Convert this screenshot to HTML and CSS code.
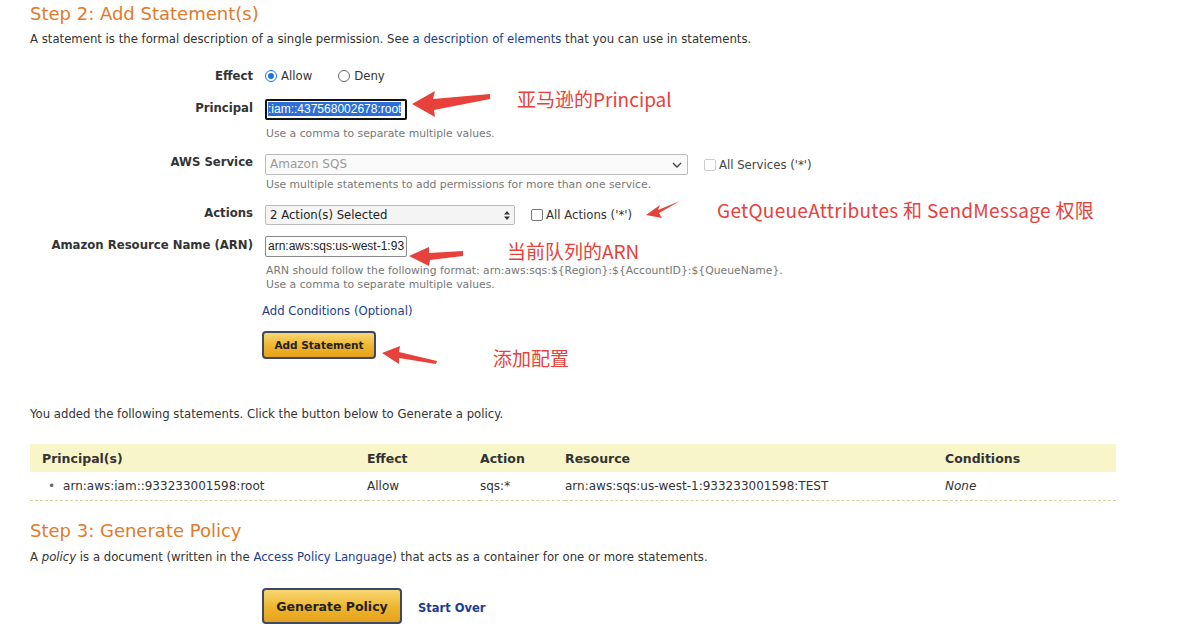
FILE: index.html
```html
<!DOCTYPE html>
<html lang="en">
<head>
    <meta charset="UTF-8">
    <meta name="viewport" content="width=device-width, initial-scale=1.0">
    <title>AWS Policy Generator</title>
    <link rel="stylesheet" href="styles.css">
</head>
<body>

    <div class="page">
        <h2 class="step-title">Step 2: Add Statement(s)</h2>
        <p class="intro">A statement is the formal description of a single permission. See <a href="#">a description of elements</a> that you can use in statements.</p>

        <div class="form">
            <div class="label">Effect</div>
            <div class="field radios">
                <label class="radio"><span class="dot on"></span>Allow</label>
                <label class="radio"><span class="dot"></span>Deny</label>
            </div>

            <div class="label lbl-principal">Principal</div>
            <div class="field f-principal">
                <div class="input focused"><span class="sel">:iam::437568002678:root</span></div>
                <div class="hint">Use a comma to separate multiple values.</div>
            </div>

            <div class="label lbl-service">AWS Service</div>
            <div class="field f-service">
                <div class="inline">
                    <div class="select service">Amazon SQS
                        <svg class="chev" width="10" height="6" viewBox="0 0 10 6"><path d="M1 1l4 4 4-4" fill="none" stroke="#444" stroke-width="1.4"/></svg>
                    </div>
                    <label class="check dim"><span class="box"></span>All Services ('*')</label>
                </div>
                <div class="hint">Use multiple statements to add permissions for more than one service.</div>
            </div>

            <div class="label lbl-actions">Actions</div>
            <div class="field f-actions">
                <div class="inline">
                    <div class="select actions">2 Action(s) Selected
                        <svg class="updown" width="6" height="9" viewBox="0 0 6 9"><path d="M0 3.5L3 0l3 3.5zM0 5.5L3 9l3-3.5z" fill="#333"/></svg>
                    </div>
                    <label class="check"><span class="box"></span>All Actions ('*')</label>
                </div>
            </div>

            <div class="label lbl-arn">Amazon Resource Name (ARN)</div>
            <div class="field f-arn">
                <div class="input arn">arn:aws:sqs:us-west-1:93</div>
                <div class="hint">ARN should follow the following format: arn:aws:sqs:${Region}:${AccountID}:${QueueName}.<br>Use a comma to separate multiple values.</div>
            </div>
        </div>

        <div class="actions-area">
            <a href="#" class="cond-link">Add Conditions (Optional)</a>
            <button class="gold-btn small">Add Statement</button>
        </div>

        <p class="added">You added the following statements. Click the button below to Generate a policy.</p>

        <table class="statements">
            <tr>
                <th class="c-principal">Principal(s)</th>
                <th class="c-effect">Effect</th>
                <th class="c-action">Action</th>
                <th class="c-resource">Resource</th>
                <th>Conditions</th>
            </tr>
            <tr>
                <td><span class="bullet">•</span>arn:aws:iam::933233001598:root</td>
                <td>Allow</td>
                <td>sqs:*</td>
                <td>arn:aws:sqs:us-west-1:933233001598:TEST</td>
                <td><em>None</em></td>
            </tr>
        </table>

        <h2 class="step-title step3">Step 3: Generate Policy</h2>
        <p class="intro intro3">A <em>policy</em> is a document (written in the <a href="#">Access Policy Language</a>) that acts as a container for one or more statements.</p>

        <div class="generate">
            <button class="gold-btn big">Generate Policy</button>
            <a href="#" class="start-over">Start Over</a>
        </div>

        <!-- red annotations drawn over the screenshot -->
        <svg class="marks" width="1180" height="627" viewBox="0 0 1180 627">
            <g fill="#e8413c">
                <path d="M412 104 L435 91 L433 99 L490 94 L490 99 L434 110 L435 117 Z"/>
                <path d="M646 215 L660 205 L658 210 L680 201 L659 213 L662 218 Z"/>
                <path d="M409 256 L429 247 L429 253 L463 251 L463 256 L430 260 L429 266 Z"/>
                <path d="M382 353 L400 346 L399 352 L437 361 L436 364 L399 358 L399 364 Z"/>
            </g>
        </svg>
        <div class="note n1">亚马逊的Principal</div>
        <div class="note n2">GetQueueAttributes 和 SendMessage 权限</div>
        <div class="note n3">当前队列的ARN</div>
        <div class="note n4">添加配置</div>
    </div>

</body>
</html>
```

FILE: styles.css
```css
body {
    margin: 0;
    background: white;
    font-family: "DejaVu Sans", Verdana, sans-serif;
    font-size: 11.7px;
    color: #333;
}
.page {
    position: relative;
    width: 1180px;
    height: 627px;
    overflow: hidden;
    padding: 0 0 0 30px;
    box-sizing: border-box;
}
a {
    color: #1b3d8f;
    text-decoration: none;
}
.step-title {
    margin: 0;
    padding-top: 3px;
    font-size: 18px;
    font-weight: normal;
    color: #e27a2a;
    line-height: 22px;
}
.intro {
    margin: 7px 0 0 0;
    line-height: 14px;
}

.form {
    display: grid;
    grid-template-columns: 223px auto;
    column-gap: 12px;
    margin-top: 23px;
}
.label {
    text-align: right;
    font-weight: bold;
    line-height: 14px;
}
.field {
    line-height: 14px;
}
.radios {
    display: flex;
    gap: 26px;
    margin-bottom: 16px;
}
.radio {
    display: flex;
    align-items: center;
    gap: 4px;
}
.dot {
    width: 12px;
    height: 12px;
    border: 1px solid #666;
    border-radius: 50%;
    box-sizing: border-box;
    position: relative;
    background: white;
}
.dot.on {
    border-color: #1a73e8;
}
.dot.on::after {
    content: "";
    position: absolute;
    left: 2px;
    top: 2px;
    width: 6px;
    height: 6px;
    border-radius: 50%;
    background: #1a73e8;
}
.lbl-principal { padding-top: 2px; }
.lbl-service { padding-top: 1px; }
.lbl-actions { padding-top: 1px; }
.lbl-arn { padding-top: 2px; }

.input {
    width: 142px;
    height: 21px;
    border: 1px solid #888;
    border-radius: 2px;
    box-sizing: border-box;
    font-family: "Liberation Sans", Arial, sans-serif;
    font-size: 12px;
    line-height: 19px;
    padding: 0 2px;
    overflow: hidden;
    white-space: nowrap;
    color: #222;
}
.input.focused {
    border: 2px solid #111;
    padding: 0 1px;
    line-height: 17px;
}
.sel {
    background: #2b6fd6;
    color: white;
}
.hint {
    color: #777;
    font-size: 10.8px;
    line-height: 14px;
    margin-left: 1px;
}
.f-principal .hint { margin-top: 7px; margin-bottom: 13px; }
.f-service .hint { margin-top: 3px; margin-bottom: 13px; }
.f-actions { margin-bottom: 11px; }
.f-arn .hint { margin-top: 7px; }

.inline {
    display: flex;
    align-items: center;
}
.select {
    position: relative;
    height: 21px;
    box-sizing: border-box;
    border: 1px solid #bbb;
    border-radius: 2px;
    padding: 0 4px;
    line-height: 19px;
    background: #fafafa;
}
.select.service {
    width: 423px;
    color: #999;
    font-size: 12px;
}
.select.actions {
    width: 250px;
    height: 20px;
    line-height: 18px;
    color: #222;
    background: #f4f4f4;
}
.chev {
    position: absolute;
    right: 5px;
    top: 7px;
}
.updown {
    position: absolute;
    right: 4px;
    top: 5px;
}
.check {
    display: flex;
    align-items: center;
    gap: 3px;
    margin-left: 16px;
}
.check.dim {
    color: #444;
}
.check.dim .box {
    border-color: #ccc;
}
.box {
    width: 12px;
    height: 12px;
    border: 1px solid #777;
    border-radius: 2px;
    box-sizing: border-box;
}

.actions-area {
    margin-left: 232px;
    display: flex;
    flex-direction: column;
    align-items: flex-start;
}
.cond-link {
    line-height: 14px;
    margin-top: 12px;
}
.gold-btn {
    font-family: "DejaVu Sans", Verdana, sans-serif;
    font-weight: bold;
    color: #222;
    border: 2px solid #3c4a66;
    border-radius: 4px;
    background: linear-gradient(#f8d774, #eeb52c 55%, #e6a11c);
    cursor: pointer;
}
.gold-btn.small {
    margin-top: 13px;
    width: 114px;
    height: 28px;
    font-size: 10.5px;
    padding: 0;
}
.added {
    margin: 48px 0 0 0;
    line-height: 14px;
}

.statements {
    margin-top: 23px;
    width: 1086px;
    border-collapse: collapse;
}
.statements th {
    background: #f8f6c9;
    text-align: left;
    height: 27px;
    padding: 1px 0 0 0;
    font-size: 12.5px;
    color: #333;
}
.statements th:first-child,
.statements td:first-child {
    padding-left: 12px;
}
.statements td {
    height: 28px;
    padding: 0;
    border-bottom: 1px dashed #d9d09a;
    font-size: 12px;
    color: #333;
}
.c-principal { width: 325px; }
.c-effect { width: 113px; }
.c-action { width: 85px; }
.c-resource { width: 380px; }
.bullet {
    margin: 0 8px 0 6px;
    color: #666;
}
.step3 {
    margin-top: 19px;
    padding-top: 0;
}
.intro3 {
    margin-top: 8px;
}
.generate {
    margin: 24px 0 0 232px;
    display: flex;
    align-items: center;
    gap: 16px;
}
.gold-btn.big {
    width: 140px;
    height: 36px;
    font-size: 12.5px;
    padding: 0;
}
.start-over {
    font-weight: bold;
    font-size: 11.5px;
    color: #1b3d8f;
    padding-top: 3px;
}

.marks {
    position: absolute;
    left: 0;
    top: 0;
    pointer-events: none;
}
.note {
    position: absolute;
    color: #e8413c;
    font-family: "Noto Sans CJK SC", "Noto Sans", sans-serif;
    font-size: 19px;
    line-height: 22px;
    white-space: nowrap;
}
.n1 { left: 517px; top: 88px; }
.n2 { left: 717px; top: 199px; letter-spacing: 0.3px; }
.n3 { left: 507px; top: 240px; }
.n4 { left: 493px; top: 347px; }
```
